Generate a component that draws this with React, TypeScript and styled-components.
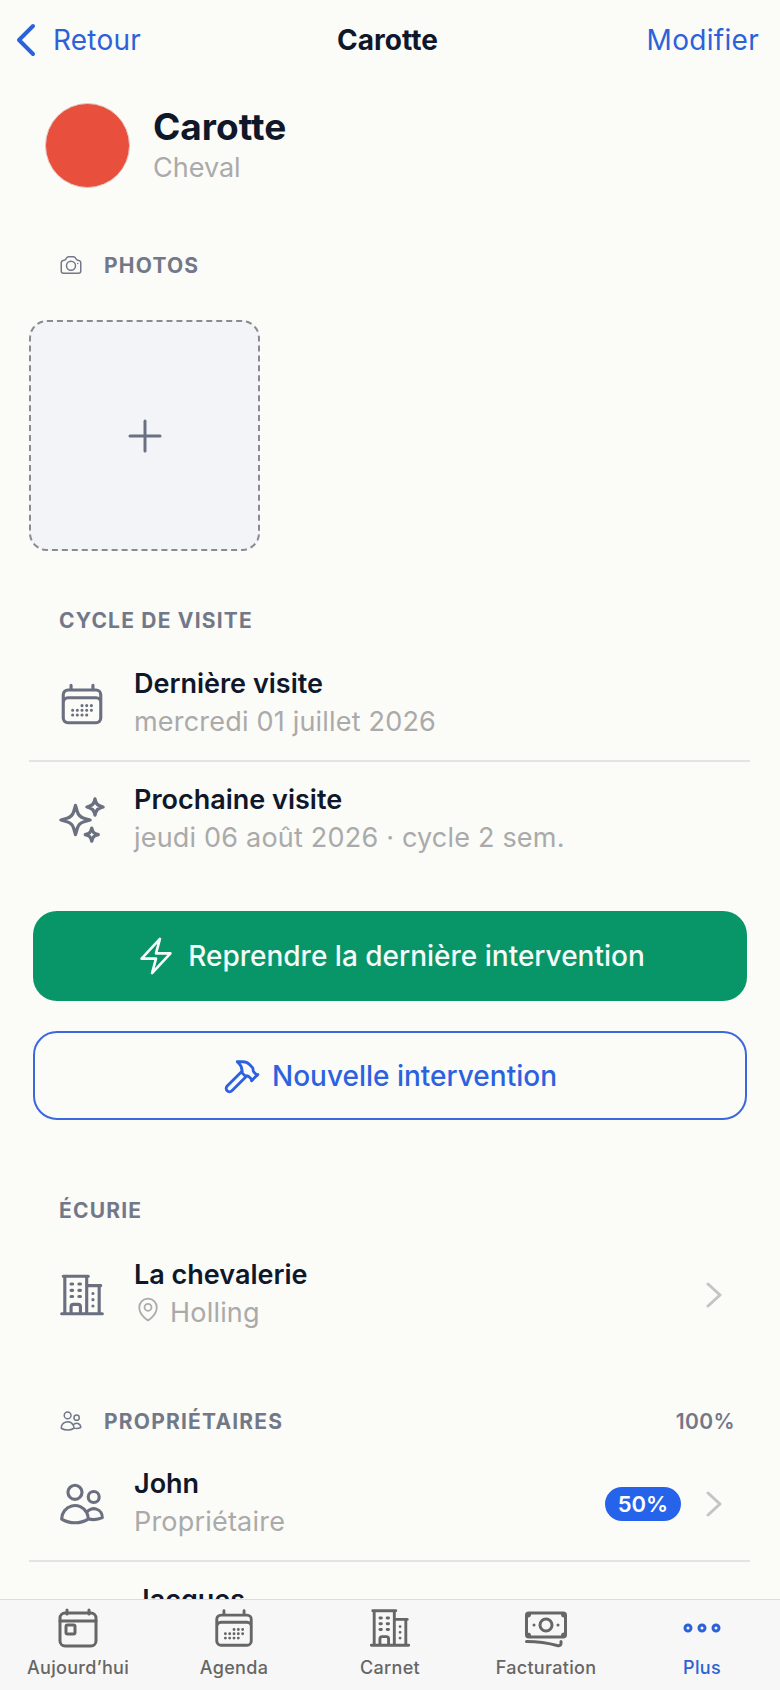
import styled, { createGlobalStyle } from "styled-components";
import { Hammer } from "lucide-react";
import {
  HiOutlineBanknotes,
  HiOutlineBolt,
  HiOutlineBuildingOffice2,
  HiOutlineCalendarDays,
  HiOutlineCamera,
  HiOutlineMapPin,
  HiOutlineSparkles,
  HiOutlineUsers,
} from "react-icons/hi2";

const GlobalStyle = createGlobalStyle`
  html, body {
    margin: 0;
    padding: 0;
    background: #fbfbf8;
    font-family: Inter, "Liberation Sans", sans-serif;
  }
  * { box-sizing: border-box; }
`;

const Screen = styled.div`
  width: 780px;
  height: 1690px;
  display: flex;
  flex-direction: column;
  overflow: hidden;
  background: #fbfbf8;
`;

const Scroll = styled.main`
  flex: 1;
  min-height: 0;
  overflow: hidden;
  padding: 0 30px 0 29px;
`;

/* top nav */
const NavBar = styled.header`
  height: 80px;
  margin: 0 -30px 0 -29px;
  padding: 0 21px 0 16px;
  display: grid;
  grid-template-columns: 1fr auto 1fr;
  align-items: center;
`;

const BackLink = styled.a`
  display: flex;
  align-items: center;
  gap: 17px;
  color: #2c62d9;
  font-size: 28px;
  letter-spacing: 0.2px;
`;

const NavTitle = styled.h1`
  margin: 0;
  font-size: 28px;
  font-weight: 700;
  color: #0f172a;
`;

const EditLink = styled.a`
  justify-self: end;
  color: #2c62d9;
  font-size: 28px;
  letter-spacing: 0.3px;
`;

const Profile = styled.section`
  margin: 23px 0 0 16px;
  display: flex;
  align-items: center;
  gap: 23px;
`;

const Avatar = styled.div`
  width: 85px;
  height: 85px;
  border-radius: 50%;
  background: #e94f3d;
  border: 1.5px solid #e6c8c2;
`;

const ProfileName = styled.div`
  font-size: 37px;
  line-height: 44px;
  font-weight: 700;
  color: #0f172a;
`;

const ProfileKind = styled.div`
  font-size: 27px;
  line-height: 38px;
  color: #aaaaaa;
`;

const SectionLabel = styled.div<{ $top: number }>`
  margin-top: ${(p) => p.$top}px;
  height: 24px;
  padding-left: 30px;
  display: flex;
  align-items: center;
  gap: 21px;
  font-size: 21px;
  font-weight: 700;
  letter-spacing: 1.2px;
  color: #737888;
`;

const SectionRight = styled.span`
  margin-left: auto;
  margin-right: 15px;
  letter-spacing: 0.4px;
  font-weight: 600;
`;

const PhotoTile = styled.button`
  display: flex;
  align-items: center;
  justify-content: center;
  margin-top: 43px;
  width: 231px;
  height: 231px;
  padding: 0;
  border-radius: 18px;
  border: 2px dashed #8a8a92;
  background: #f3f4f7;
  color: #6b7080;
`;

const Row = styled.div<{ $top?: number; $divided?: boolean }>`
  margin-top: ${(p) => p.$top ?? 0}px;
  padding: 18px 0;
  display: flex;
  align-items: center;
  border-bottom: ${(p) => (p.$divided ? "2px solid #e4e4e4" : "none")};

  & + & {
    padding-top: 20px;
  }
`;

const RowIcon = styled.div`
  flex: 0 0 105px;
  display: flex;
  justify-content: center;
  color: #6b7080;
`;

const RowText = styled.div`
  flex: 1;
  min-width: 0;
`;

const RowTitle = styled.div`
  font-size: 27px;
  line-height: 36px;
  font-weight: 600;
  color: #0f172a;
`;

const RowSub = styled.div`
  display: flex;
  align-items: center;
  font-size: 27px;
  line-height: 40px;
  letter-spacing: 0.2px;
  color: #aaaaaa;
`;

const PinWrap = styled.span`
  display: flex;
  margin: -8px 8px 0 0;
  color: #aaaaaa;
`;

const Badge = styled.span`
  width: 76px;
  height: 34px;
  margin-right: 25px;
  border-radius: 17px;
  display: flex;
  align-items: center;
  justify-content: center;
  background: #2563eb;
  color: #fff;
  font-size: 22px;
  font-weight: 600;
`;

const ChevronWrap = styled.span`
  display: flex;
  margin-right: 28px;
  color: #c4c4c4;
`;

const ActionButton = styled.button<{ $primary?: boolean; $top: number }>`
  display: flex;
  align-items: center;
  justify-content: center;
  width: 714px;
  height: ${(p) => (p.$primary ? 90 : 89)}px;
  margin: ${(p) => p.$top}px 0 0 4px;
  border-radius: 24px;
  font-family: inherit;
  font-size: 28px;
  font-weight: 500;
  gap: 11px;
  color: ${(p) => (p.$primary ? "#f4fbf8" : "#2c62e0")};
  background: ${(p) => (p.$primary ? "#089669" : "transparent")};
  border: ${(p) => (p.$primary ? "none" : "2px solid #3b68dc")};
`;

/* bottom tab bar */
const TabBar = styled.nav`
  flex: 0 0 91px;
  display: grid;
  grid-template-columns: repeat(5, 1fr);
  background: #f7f7f7;
  border-top: 1px solid #dddddd;
`;

const Tab = styled.div<{ $active?: boolean }>`
  display: flex;
  flex-direction: column;
  align-items: center;
  color: ${(p) => (p.$active ? "#2c62d6" : "#666666")};
  font-size: 18px;
  font-weight: 500;
  letter-spacing: 0.3px;
`;

const TabIcon = styled.div`
  height: 56px;
  display: flex;
  align-items: center;
  justify-content: center;
`;

const TabLabel = styled.span`
  line-height: 24px;
`;

function ChevronLeft() {
  return (
    <svg width="20" height="34" viewBox="0 0 20 34" fill="none" stroke="currentColor" strokeWidth="4" strokeLinecap="round" strokeLinejoin="round">
      <path d="M17 3 3 17l14 14" />
    </svg>
  );
}

function ChevronRight() {
  return (
    <svg width="16" height="26" viewBox="0 0 16 26" fill="none" stroke="currentColor" strokeWidth="3" strokeLinecap="round" strokeLinejoin="round">
      <path d="m2 2 12 11L2 24" />
    </svg>
  );
}

function PlusGlyph() {
  return (
    <svg width="34" height="34" viewBox="0 0 34 34" fill="none" stroke="currentColor" strokeWidth="3" strokeLinecap="round">
      <path d="M17 2v30M2 17h30" />
    </svg>
  );
}

function TodayIcon() {
  return (
    <svg width="40" height="40" viewBox="0 0 40 40" fill="none" stroke="currentColor" strokeWidth="3" strokeLinecap="round" strokeLinejoin="round">
      <path d="M9 2v4M31 2v4" />
      <rect x="2" y="5" width="36" height="33" rx="5" />
      <path d="M2 13h36" />
      <rect x="8" y="17" width="9" height="9" rx="1.5" />
    </svg>
  );
}

function MoreIcon() {
  return (
    <svg width="38" height="10" viewBox="0 0 38 10" fill="none" stroke="currentColor" strokeWidth="3">
      <circle cx="5" cy="5" r="3" />
      <circle cx="19" cy="5" r="3" />
      <circle cx="33" cy="5" r="3" />
    </svg>
  );
}

export default function App() {
  return (
    <Screen>
      <GlobalStyle />
      <Scroll>
        <NavBar>
          <BackLink>
            <ChevronLeft />
            Retour
          </BackLink>
          <NavTitle>Carotte</NavTitle>
          <EditLink>Modifier</EditLink>
        </NavBar>

        <Profile>
          <Avatar />
          <div>
            <ProfileName>Carotte</ProfileName>
            <ProfileKind>Cheval</ProfileKind>
          </div>
        </Profile>

        <SectionLabel $top={65}>
          <HiOutlineCamera size={24} />
          PHOTOS
        </SectionLabel>
        <PhotoTile>
          <PlusGlyph />
        </PhotoTile>

        <SectionLabel $top={57}>CYCLE DE VISITE</SectionLabel>
        <Row $top={16} $divided>
          <RowIcon>
            <HiOutlineCalendarDays size={50} />
          </RowIcon>
          <RowText>
            <RowTitle>Dernière visite</RowTitle>
            <RowSub>mercredi 01 juillet 2026</RowSub>
          </RowText>
        </Row>
        <Row>
          <RowIcon>
            <HiOutlineSparkles size={52} />
          </RowIcon>
          <RowText>
            <RowTitle>Prochaine visite</RowTitle>
            <RowSub>jeudi 06 août 2026 · cycle 2 sem.</RowSub>
          </RowText>
        </Row>

        <ActionButton $primary $top={35}>
          <HiOutlineBolt size={42} />
          Reprendre la dernière intervention
        </ActionButton>
        <ActionButton $top={30}>
          <Hammer size={38} strokeWidth={1.8} />
          Nouvelle intervention
        </ActionButton>

        <SectionLabel $top={78}>ÉCURIE</SectionLabel>
        <Row $top={17}>
          <RowIcon>
            <HiOutlineBuildingOffice2 size={50} />
          </RowIcon>
          <RowText>
            <RowTitle>La chevalerie</RowTitle>
            <RowSub>
              <PinWrap>
                <HiOutlineMapPin size={28} />
              </PinWrap>
              Holling
            </RowSub>
          </RowText>
          <ChevronWrap>
            <ChevronRight />
          </ChevronWrap>
        </Row>

        <SectionLabel $top={58}>
          <HiOutlineUsers size={24} />
          PROPRIÉTAIRES
          <SectionRight>100%</SectionRight>
        </SectionLabel>
        <Row $top={15} $divided>
          <RowIcon>
            <HiOutlineUsers size={50} />
          </RowIcon>
          <RowText>
            <RowTitle>John</RowTitle>
            <RowSub>Propriétaire</RowSub>
          </RowText>
          <Badge>50%</Badge>
          <ChevronWrap>
            <ChevronRight />
          </ChevronWrap>
        </Row>
        <Row>
          <RowIcon>
            <HiOutlineUsers size={50} />
          </RowIcon>
          <RowText>
            <RowTitle>Jacques</RowTitle>
            <RowSub>Propriétaire</RowSub>
          </RowText>
          <Badge>50%</Badge>
          <ChevronWrap>
            <ChevronRight />
          </ChevronWrap>
        </Row>
      </Scroll>

      <TabBar>
        <Tab>
          <TabIcon>
            <TodayIcon />
          </TabIcon>
          <TabLabel>Aujourd’hui</TabLabel>
        </Tab>
        <Tab>
          <TabIcon>
            <HiOutlineCalendarDays size={46} />
          </TabIcon>
          <TabLabel>Agenda</TabLabel>
        </Tab>
        <Tab>
          <TabIcon>
            <HiOutlineBuildingOffice2 size={46} />
          </TabIcon>
          <TabLabel>Carnet</TabLabel>
        </Tab>
        <Tab>
          <TabIcon>
            <HiOutlineBanknotes size={48} />
          </TabIcon>
          <TabLabel>Facturation</TabLabel>
        </Tab>
        <Tab $active>
          <TabIcon>
            <MoreIcon />
          </TabIcon>
          <TabLabel>Plus</TabLabel>
        </Tab>
      </TabBar>
    </Screen>
  );
}
